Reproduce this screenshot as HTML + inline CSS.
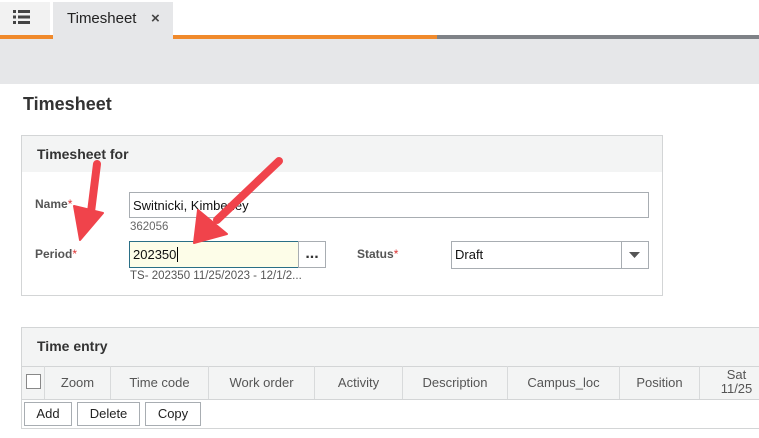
<!DOCTYPE html>
<html><head><style>
*{margin:0;padding:0;box-sizing:border-box}
body{width:759px;height:438px;overflow:hidden;background:#fff;font-family:"Liberation Sans",sans-serif;position:relative;color:#333}
.a{position:absolute}
.lbl{font-size:12px;font-weight:bold;color:#555}
.star{color:#d33;font-weight:normal}
.inp{border:1px solid #a8adb2;background:#fff;font-size:13px;color:#111;padding:5px 0 0 3px}
.th{position:absolute;top:366px;height:33px;border-right:1px solid #d8dadb;font-size:13px;color:#555;text-align:center;line-height:33px}
.btn{position:absolute;top:402px;height:24px;border:1px solid #a8adb2;background:#fff;font-size:13px;color:#222;text-align:center;line-height:22px}
</style></head><body>
<div class="a" style="left:0;top:2px;width:50px;height:34px;background:#f2f2f2"></div>
<svg class="a" style="left:13px;top:10px" width="17" height="15"><g fill="#444"><rect x="0" y="0" width="3" height="3"/><rect x="5" y="0" width="12" height="3"/><rect x="0" y="5.5" width="3" height="3"/><rect x="5" y="5.5" width="12" height="3"/><rect x="0" y="11" width="3" height="3"/><rect x="5" y="11" width="12" height="3"/></g></svg>
<div class="a" style="left:0;top:35px;width:437px;height:4px;background:#f08a2c"></div>
<div class="a" style="left:437px;top:35px;width:322px;height:4px;background:#7f8287"></div>
<div class="a" style="left:53px;top:2px;width:120px;height:37px;background:#e6e7e9"></div>
<div class="a" style="left:67px;top:10px;font-size:15px;color:#222">Timesheet</div>
<div class="a" style="left:151px;top:10px;font-size:15px;color:#444;font-weight:bold">×</div>
<div class="a" style="left:0;top:39px;width:759px;height:45px;background:#e6e7e9"></div>
<div class="a" style="left:23px;top:94px;font-size:18px;font-weight:bold;color:#333">Timesheet</div>

<div class="a" style="left:21px;top:135px;width:642px;height:161px;border:1px solid #d3d5d6"></div>
<div class="a" style="left:22px;top:136px;width:640px;height:36px;background:#f3f4f4"></div>
<div class="a" style="left:37px;top:146px;font-size:14px;font-weight:bold;color:#333">Timesheet for</div>
<div class="a lbl" style="left:35px;top:197px">Name<span class="star">*</span></div>
<div class="a inp" style="left:129px;top:192px;width:520px;height:26px">Switnicki, Kimberley</div>
<div class="a" style="left:130px;top:221px;font-size:11.5px;color:#666">362056</div>
<div class="a lbl" style="left:35px;top:247px">Period<span class="star">*</span></div>
<div class="a inp" style="left:129px;top:241px;width:170px;height:27px;background:#fdfde8;border-color:#2a6f86">202350<span style="border-left:1px solid #000;margin-left:1px"></span></div>
<div class="a" style="left:298px;top:241px;width:28px;height:27px;border:1px solid #a8adb2;font-weight:bold;font-size:16px;text-align:center;line-height:24px;color:#333">...</div>
<div class="a" style="left:130px;top:270px;font-size:11.5px;color:#555">TS- 202350 11/25/2023 - 12/1/2...</div>
<div class="a lbl" style="left:357px;top:247px">Status<span class="star">*</span></div>
<div class="a inp" style="left:451px;top:241px;width:198px;height:28px">Draft</div>
<div class="a" style="left:621px;top:242px;width:1px;height:26px;background:#a8adb2"></div>
<svg class="a" style="left:629px;top:252px" width="12" height="7"><path d="M0 0H11L5.5 6Z" fill="#555"/></svg>

<div class="a" style="left:21px;top:327px;width:740px;height:102px;border:1px solid #d3d5d6"></div>
<div class="a" style="left:22px;top:328px;width:740px;height:71px;background:#f3f4f4"></div>
<div class="a" style="left:22px;top:366px;width:740px;height:1px;background:#d3d5d6"></div>
<div class="a" style="left:22px;top:399px;width:740px;height:1px;background:#d3d5d6"></div>
<div class="a" style="left:37px;top:338px;font-size:14px;font-weight:bold;color:#333">Time entry</div>
<div class="th" style="left:22px;width:23px"><div style="position:absolute;left:4px;top:8px;width:15px;height:15px;border:1px solid #888;background:#fff"></div></div>
<div class="th" style="left:45px;width:66px">Zoom</div>
<div class="th" style="left:111px;width:98px">Time code</div>
<div class="th" style="left:209px;width:106px">Work order</div>
<div class="th" style="left:315px;width:88px">Activity</div>
<div class="th" style="left:403px;width:105px">Description</div>
<div class="th" style="left:508px;width:112px">Campus_loc</div>
<div class="th" style="left:620px;width:80px">Position</div>
<div class="th" style="left:700px;width:74px;line-height:14px;padding-top:2px">Sat<br>11/25</div>
<div class="btn" style="left:24px;width:48px">Add</div>
<div class="btn" style="left:77px;width:63px">Delete</div>
<div class="btn" style="left:145px;width:56px">Copy</div>

<svg class="a" style="left:0;top:0" width="759" height="438">
<g fill="#f0434b" stroke="#f0434b" stroke-linejoin="round" stroke-linecap="round">
<path d="M97 164L91 212" stroke-width="8" fill="none"/>
<path d="M74 206L103 213L80 240Z" stroke-width="2"/>
<path d="M279 161L217 220" stroke-width="8" fill="none"/>
<path d="M198 210L227 234L194 243Z" stroke-width="2"/>
</g></svg>
</body></html>
